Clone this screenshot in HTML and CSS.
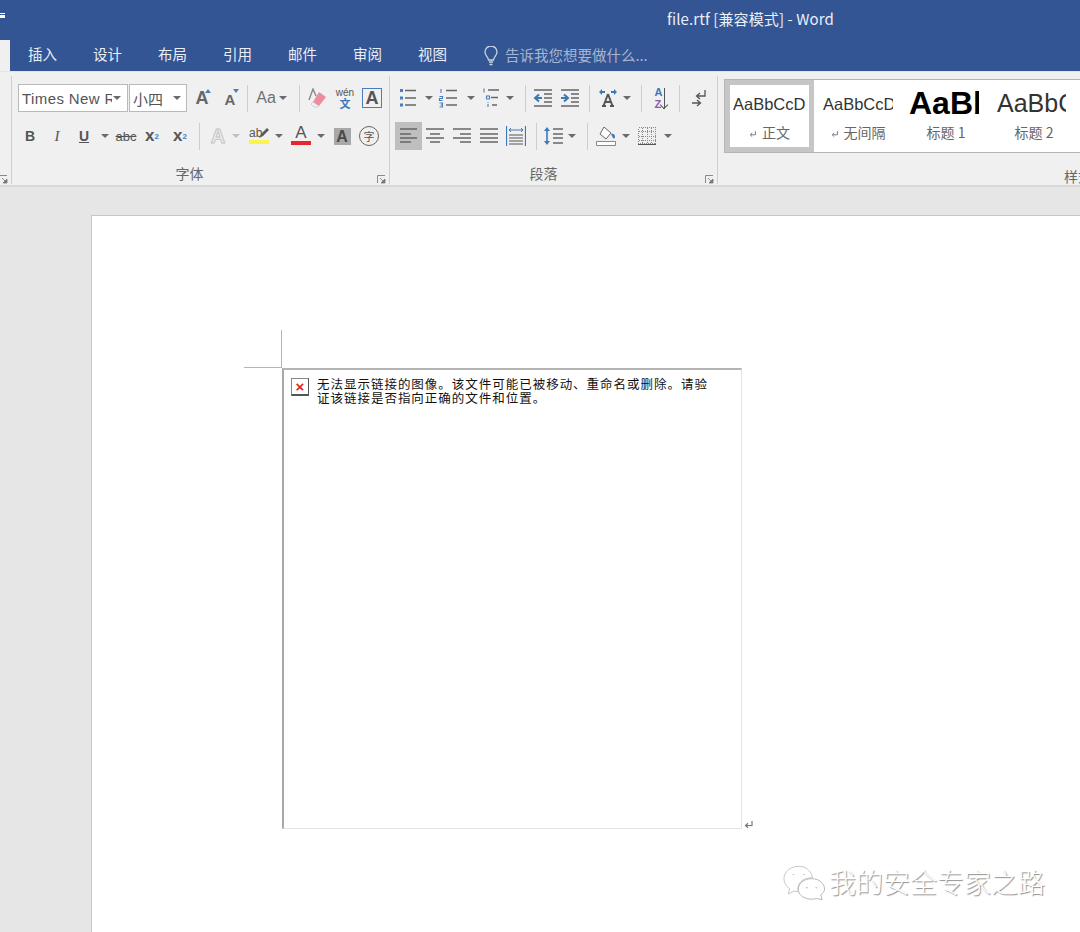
FILE: index.html
```html
<!DOCTYPE html>
<html lang="zh-CN">
<head>
  <meta charset="UTF-8">
  <meta name="viewport" content="width=device-width, initial-scale=1">
  <title>file.rtf [兼容模式] - Word</title>
  <link rel="stylesheet" href="styles.css">
</head>
<body>
  <svg class="defs" width="0" height="0">
    <symbol id="caret" viewBox="0 0 8 4"><path d="M0 0h8L4 4z" fill="#6a6a6a"/></symbol>
    <symbol id="launcher" viewBox="0 0 9 9"><path d="M.5 8V.5H8" fill="none" stroke="#8a8a8a"/><path d="M3 3l4 4M8 4v4H4z" fill="#777" stroke="#777" stroke-width=".8"/></symbol>
    <symbol id="ret" viewBox="0 0 10 9"><path d="M8 1v4.500H2M4 3.200L1.500 5.500 4 7.800" fill="none" stroke="#777" stroke-width="1.200"/></symbol>
    <symbol id="bullets" viewBox="0 0 20 20">
      <path d="M7 2.500h11M7 10h11M7 17h11" stroke="#666" stroke-width="1.400"/>
      <path d="M2 2.500h3M2 10h3M2 17h3" stroke="#4a7ebb" stroke-width="3"/>
    </symbol>
    <symbol id="numbering" viewBox="0 0 20 20">
      <path d="M8 2.500h11M8 10h11M8 17h11" stroke="#666" stroke-width="1.400"/>
      <path d="M3 1v4M1.500 8.500h3v2h-3v2h3M1.500 15h3v4h-3M2.500 17h2" fill="none" stroke="#4a7ebb" stroke-width="1.100"/>
    </symbol>
    <symbol id="multilevel" viewBox="0 0 20 20">
      <path d="M6 2h11M9 9.500h7M10 17h5" stroke="#666" stroke-width="1.300"/>
      <path d="M2 .5v4M4.500 8h3v3h-3zM6 14v.8M6 16v3" fill="none" stroke="#4a7ebb" stroke-width="1.100"/>
    </symbol>
    <symbol id="outdent" viewBox="0 0 20 20">
      <path d="M1 2h18M11 6h8M11 10h8M11 14h8M1 18h18" stroke="#666" stroke-width="1.300"/>
      <path d="M9 10H3M6 6.500L2 10l4 3.500" fill="none" stroke="#3c78b8" stroke-width="2"/>
    </symbol>
    <symbol id="indent" viewBox="0 0 20 20">
      <path d="M1 2h18M11 6h8M11 10h8M11 14h8M1 18h18" stroke="#666" stroke-width="1.300"/>
      <path d="M1 10h6M4 6.500L8 10l-4 3.500" fill="none" stroke="#3c78b8" stroke-width="2"/>
    </symbol>
    <symbol id="direction" viewBox="0 0 20 20">
      <path d="M4 18h4M12 18h4M10 6l-4.500 12M10 6l4.500 12M7 14h6" fill="none" stroke="#555" stroke-width="2"/>
      <path d="M1 4l3-3v2h3v2H4v2zM19 4l-3-3v2h-3v2h3v2z" fill="#3c78b8"/>
    </symbol>
    <symbol id="returns" viewBox="0 0 20 20">
      <path d="M16 2v6H8M11 5L7.500 8l3.500 3" fill="none" stroke="#555" stroke-width="1.300"/>
      <path d="M3 15h8M8 12l3.500 3L8 18" fill="none" stroke="#555" stroke-width="1.300"/>
    </symbol>
    <symbol id="alignleft" viewBox="0 0 20 20"><path d="M1 3h17M1 8h11M1 12h17M1 16h11" stroke="#666" stroke-width="1.300"/></symbol>
    <symbol id="aligncenter" viewBox="0 0 20 20"><path d="M1 3h18M5 8h10M1 12h18M5 16h10" stroke="#666" stroke-width="1.300"/></symbol>
    <symbol id="alignright" viewBox="0 0 20 20"><path d="M1 3h18M8 8h11M1 12h18M8 16h11" stroke="#666" stroke-width="1.300"/></symbol>
    <symbol id="justify" viewBox="0 0 20 20"><path d="M1 3h18M1 8h18M1 12h18M1 16h18" stroke="#666" stroke-width="1.300"/></symbol>
    <symbol id="distribute" viewBox="0 0 20 20">
      <path d="M.5 0v20M19.500 0v20" stroke="#3c78b8" stroke-width="1.200"/>
      <path d="M3 4h14M5 2l-2 2 2 2M15 2l2 2-2 2" fill="none" stroke="#3c78b8" stroke-width="1"/>
      <path d="M3 9h14M3 12h14M3 15h14M3 18h14" stroke="#555" stroke-width="1.200"/>
    </symbol>
    <symbol id="linespacing" viewBox="0 0 20 20">
      <path d="M3 3v14" stroke="#3c78b8" stroke-width="1.600"/>
      <path d="M0 5l3-4 3 4zM0 15l3 4 3-4z" fill="#3c78b8"/>
      <path d="M9 3h10M9 8h10M9 12h10M9 17h10" stroke="#666" stroke-width="1.400"/>
    </symbol>
    <symbol id="shading" viewBox="0 0 20 20">
      <path d="M8 1l7 6-5 6-6-5z" fill="#fff" stroke="#666"/>
      <path d="M15 8c2-1 4 0 4 3 0 1-1 2-2 1z" fill="#3c78b8"/>
      <path d="M.5 15.500h19v4H.5z" fill="#fff" stroke="#888"/>
    </symbol>
    <symbol id="borders" viewBox="0 0 18 18">
      <path d="M.5.5h17v16H.5zM4.500.5v16M9 .5v16M13.500.5v16M.5 4.500h17M.5 9h17M.5 13h17" fill="none" stroke="#8a8a8a" stroke-dasharray="1 1" shape-rendering="crispEdges"/>
      <path d="M0 17.500h18" stroke="#555" shape-rendering="crispEdges"/>
    </symbol>
    <symbol id="eraser" viewBox="0 0 20 20">
      <path d="M11 4l7 5-7 9-6-4z" fill="#eb8d9c"/>
      <path d="M5 14l6 4-2 1H6l-3-3z" fill="#f6f0f0" stroke="#bbb" stroke-width=".6"/>
      <path d="M1 12L5 1l3 7" fill="none" stroke="#888" stroke-width="1.400"/>
    </symbol>
    <symbol id="pen" viewBox="0 0 12 12">
      <path d="M1 11l2-4 6-6 2 2-6 6z" fill="#5a5a5a"/>
    </symbol>
    <symbol id="bulb" viewBox="0 0 14 20">
      <path d="M4.500 14c0-3-3.500-4-3.500-8a6 6 0 0 1 12 0c0 4-3.500 5-3.500 8z" fill="none" stroke="#c9d3e4" stroke-width="1.300"/>
      <path d="M5 16h4M5.500 18.500h3" stroke="#c9d3e4" stroke-width="1.300"/>
    </symbol>
    <symbol id="wechat" viewBox="0 0 44 36">
      <path d="M17 1C8 1 1 6.500 1 14c0 4.500 2.500 8 6 10.500L5.500 30l6-3c1.500.4 3 .6 4.500.6C14 20 20 12.500 31 13 29.500 6 24 1 17 1z" fill="#fff" stroke="#c4c4c4"/>
      <path d="M30 14c-8 0-14 5-14 11s6 10.500 14 10.500c2 0 3-.2 5-.8l6 1.300-1.500-5c2.500-2 4-3.800 4-6C43.500 19 38 14 30 14z" fill="#fff" stroke="#b5b5b5"/>
      <path d="M11 9v1M22 9v1M25 23v1M35 23v1" stroke="#b8b8b8" stroke-width="2"/>
    </symbol>
  </svg>

  <header class="titlebar">
    <div class="title-row">
      <span class="qat"></span>
      <span class="doc-title">file.rtf [兼容模式] - Word</span>
    </div>
    <nav class="tabs">
      <span class="tab-active"></span>
      <a class="tab">插入</a>
      <a class="tab">设计</a>
      <a class="tab">布局</a>
      <a class="tab">引用</a>
      <a class="tab">邮件</a>
      <a class="tab">审阅</a>
      <a class="tab">视图</a>
      <svg class="bulb"><use href="#bulb"/></svg>
      <span class="tell-me">告诉我您想要做什么...</span>
    </nav>
  </header>

  <section class="ribbon">
    <div class="group group-stub">
      <svg class="launcher"><use href="#launcher"/></svg>
    </div>

    <div class="group group-font">
      <div class="row row-1">
        <div class="combo combo-font m6"><span class="combo-text">Times New R</span><svg class="caret"><use href="#caret"/></svg></div>
        <div class="combo combo-size"><span class="combo-text">小四</span><svg class="caret"><use href="#caret"/></svg></div>
        <span class="tool m5 grow-a">A<i class="tri tri-up"></i></span>
        <span class="tool m8 shrink-a">A<i class="tri tri-down"></i></span>
        <span class="sep m7"></span>
        <span class="tool m8 case-a">Aa</span>
        <svg class="caret m3"><use href="#caret"/></svg>
        <span class="sep m12"></span>
        <span class="tool m8"><svg class="ic"><use href="#eraser"/></svg></span>
        <span class="tool m7 wen"><b>wén</b><b class="wen-zh">文</b></span>
        <span class="tool m7"><span class="boxed-a">A</span></span>
      </div>
      <div class="row row-2">
        <span class="tool m8 letter bold">B</span>
        <span class="tool m7 letter italic">I</span>
        <span class="tool m7 letter bold under">U</span>
        <svg class="caret m7"><use href="#caret"/></svg>
        <span class="tool m7 abc">abc</span>
        <span class="tool m6 letter bold big-x">x<sub class="script">2</sub></span>
        <span class="tool m8 letter bold big-x">x<sup class="script">2</sup></span>
        <span class="sep m9"></span>
        <span class="tool m8 outline-a">A</span>
        <svg class="caret caret-pale m4"><use href="#caret"/></svg>
        <span class="tool m9 marker"><span class="marker-ab">ab<svg class="pen"><use href="#pen"/></svg></span><i class="bar bar-yellow"></i></span>
        <svg class="caret m6"><use href="#caret"/></svg>
        <span class="tool m8 marker"><span class="marker-a">A</span><i class="bar bar-red"></i></span>
        <svg class="caret m6"><use href="#caret"/></svg>
        <span class="tool m7"><span class="shade-a">A</span></span>
        <span class="tool m7"><span class="circle-zi">字</span></span>
      </div>
      <div class="group-label">字体</div>
      <svg class="launcher"><use href="#launcher"/></svg>
    </div>

    <div class="group group-para">
      <div class="row row-1">
        <span class="tool m8"><svg class="ic"><use href="#bullets"/></svg></span>
        <svg class="caret m7"><use href="#caret"/></svg>
        <span class="tool m5"><svg class="ic"><use href="#numbering"/></svg></span>
        <svg class="caret m9"><use href="#caret"/></svg>
        <span class="tool m7"><svg class="ic"><use href="#multilevel"/></svg></span>
        <svg class="caret m4"><use href="#caret"/></svg>
        <span class="sep m11"></span>
        <span class="tool m7"><svg class="ic"><use href="#outdent"/></svg></span>
        <span class="tool m7"><svg class="ic"><use href="#indent"/></svg></span>
        <span class="sep m9"></span>
        <span class="tool m8"><svg class="ic"><use href="#direction"/></svg></span>
        <svg class="caret m5"><use href="#caret"/></svg>
        <span class="sep m10"></span>
        <span class="tool m8 sort"><span class="sort-letters"><b class="sort-a">A</b><b class="sort-z">Z</b></span><span class="sort-arrow"></span></span>
        <span class="sep m9"></span>
        <span class="tool m9"><svg class="ic"><use href="#returns"/></svg></span>
      </div>
      <div class="row row-2">
        <span class="tool tool-selected m5"><svg class="ic"><use href="#alignleft"/></svg></span>
        <span class="tool m3"><svg class="ic"><use href="#aligncenter"/></svg></span>
        <span class="tool m7"><svg class="ic"><use href="#alignright"/></svg></span>
        <span class="tool m7"><svg class="ic"><use href="#justify"/></svg></span>
        <span class="tool m7"><svg class="ic"><use href="#distribute"/></svg></span>
        <span class="sep m10"></span>
        <span class="tool m7"><svg class="ic"><use href="#linespacing"/></svg></span>
        <svg class="caret m4"><use href="#caret"/></svg>
        <span class="sep m11"></span>
        <span class="tool m8"><svg class="ic"><use href="#shading"/></svg></span>
        <svg class="caret m6"><use href="#caret"/></svg>
        <span class="tool m7"><svg class="ic ic-small"><use href="#borders"/></svg></span>
        <svg class="caret m7"><use href="#caret"/></svg>
      </div>
      <div class="group-label">段落</div>
      <svg class="launcher"><use href="#launcher"/></svg>
    </div>

    <div class="group group-styles">
      <div class="gallery">
        <div class="style-item style-selected">
          <div class="sample sample-body">AaBbCcDd</div>
          <div class="style-name"><svg class="ret"><use href="#ret"/></svg>正文</div>
        </div>
        <div class="style-item">
          <div class="sample sample-body">AaBbCcDd</div>
          <div class="style-name"><svg class="ret"><use href="#ret"/></svg>无间隔</div>
        </div>
        <div class="style-item">
          <div class="sample sample-h1">AaBb</div>
          <div class="style-name">标题 1</div>
        </div>
        <div class="style-item">
          <div class="sample sample-h2">AaBbC</div>
          <div class="style-name">标题 2</div>
        </div>
      </div>
      <div class="group-label label-styles">样式</div>
    </div>
  </section>

  <main class="workspace">
    <div class="page">
      <div class="picture-wrap">
        <span class="crop crop-v"></span>
        <span class="crop crop-h"></span>
        <div class="picture">
          <span class="broken"><i class="broken-x">×</i></span>
          <p class="broken-text">无法显示链接的图像。该文件可能已被移动、重命名或删除。请验证该链接是否指向正确的文件和位置。</p>
        </div>
        <svg class="para-mark"><use href="#ret"/></svg>
      </div>
    </div>
    <div class="watermark">
      <svg class="wechat"><use href="#wechat"/></svg>
      <span class="wm-text">我的安全专家之路</span>
    </div>
  </main>
</body>
</html>
```

FILE: styles.css
```css
* { box-sizing: border-box; }
html, body { margin: 0; height: 100%; }
body { width: 1080px; height: 932px; overflow: hidden; background: #e6e6e6; font-family: "Noto Sans CJK SC", "Liberation Sans", sans-serif; color: #555; }
.defs { display: block; height: 0; }

/* title bar and tabs */
.titlebar { height: 72px; background: #335593; border-bottom: 1px solid #dfe6f2; color: #e9eef7; }
.title-row { height: 40px; display: flex; align-items: center; }
.qat { width: 5px; height: 5px; margin-top: -9px; border-top: 1px solid #fff; border-bottom: 3px solid #fff; flex: none; }
.doc-title { margin-left: 662px; margin-top: -4px; font-size: 15px; letter-spacing: .1px; white-space: nowrap; }
.tabs { height: 31px; display: flex; align-items: center; }
.tab-active { width: 10px; height: 31px; background: #f0f0f0; flex: none; }
.tab { width: 65px; text-align: center; font-size: 14.5px; padding-bottom: 5px; color: #e9eef7; }
.bulb { width: 14px; height: 20px; margin-left: 19px; flex: none; }
.tell-me { margin-left: 7px; font-size: 14.5px; color: #a6b6d2; padding-bottom: 3px; white-space: nowrap; }

/* ribbon */
.ribbon { height: 115px; background: #f0f0f0; border-bottom: 2px solid #d8d8d8; display: flex; }
.group { position: relative; height: 108px; margin-top: 4px; border-right: 1px solid #cfcfcf; flex: none; }
.group-stub { width: 12px; }
.group-font { width: 378px; }
.group-para { width: 328px; }
.group-styles { width: 362px; border-right: 0; overflow: hidden; }
.launcher { position: absolute; right: 3px; bottom: 0; width: 9px; height: 9px; }
.row { display: flex; align-items: center; height: 28px; }
.row-1 { margin-top: 8px; }
.row-2 { margin-top: 10px; }
.group-label { margin-top: 13px; text-align: center; font-size: 14px; line-height: 20px; color: #666; }
.group-font .group-label { padding-right: 22px; }
.group-para .group-label { padding-right: 20px; }
.label-styles { margin-top: 13px; margin-right: -12px; text-align: right; }

.tool { position: relative; width: 20px; height: 28px; flex: none; display: flex; align-items: center; justify-content: center; font-family: "Liberation Sans", sans-serif; color: #555; }
.tool-selected { width: 27px; background: #bfbfbf; }
.ic { width: 20px; height: 20px; flex: none; }
.ic-small { width: 18px; height: 18px; }
.caret { width: 8px; height: 4px; flex: none; }
.caret-pale { opacity: .35; }
.sep { width: 1px; height: 27px; background: #cdcdcd; flex: none; }
.m3 { margin-left: 3px; } .m4 { margin-left: 4px; } .m5 { margin-left: 5px; } .m6 { margin-left: 6px; }
.m7 { margin-left: 7px; } .m8 { margin-left: 8px; } .m9 { margin-left: 9px; } .m10 { margin-left: 10px; }
.m11 { margin-left: 11px; } .m12 { margin-left: 12px; }

.combo { height: 28px; background: #fff; border: 1px solid #b9b9b9; display: flex; align-items: center; justify-content: space-between; padding: 0 6px 0 3px; flex: none; font-size: 15px; color: #555; }
.combo-font { width: 110px; font-family: "Liberation Sans", sans-serif; letter-spacing: .4px; }
.combo-size { width: 58px; margin-left: 1px; padding-right: 5px; }
.combo-text { overflow: hidden; white-space: nowrap; }
.combo-font .combo-text { width: 90px; }

.grow-a { font-size: 18px; font-weight: 700; color: #666; }
.shrink-a { font-size: 15px; font-weight: 700; padding-top: 2px; color: #666; }
.tri { position: absolute; right: 1px; top: 5px; width: 0; height: 0; border-left: 3px solid transparent; border-right: 3px solid transparent; }
.tri-up { border-bottom: 4px solid #4a7ebb; }
.tri-down { border-top: 4px solid #4a7ebb; }
.case-a { font-size: 16px; color: #707070; }
.wen { flex-direction: column; line-height: 10px; font-size: 10px; color: #555; }
.wen b { font-weight: 400; }
.wen .wen-zh { color: #3c78b8; font-size: 11px; font-weight: 700; font-family: "Noto Sans CJK SC", sans-serif; }
.boxed-a { width: 20px; height: 20px; border: 1px solid #4a7ebb; text-align: center; font-size: 18px; font-weight: 700; line-height: 18px; color: #555; }
.letter { font-size: 14px; color: #555; }
.big-x { font-size: 17px; }
.bold { font-weight: 700; }
.italic { font-style: italic; font-family: "Liberation Serif", serif; font-size: 15px; }
.under { text-decoration: underline; }
.script { font-size: 8px; color: #4a7ebb; }
.abc { font-size: 13px; text-decoration: line-through; }
.outline-a { font-size: 20px; font-weight: 700; color: #f0f0f0; -webkit-text-stroke: 1px #c4c4c4; }
.marker { flex-direction: column; }
.marker-ab { position: relative; width: 20px; font-size: 12px; line-height: 14px; margin-top: -2px; }
.pen { position: absolute; right: -1px; top: 1px; width: 12px; height: 12px; }
.marker-a { font-size: 17px; line-height: 16px; margin-top: -3px; }
.bar { display: block; width: 20px; height: 4px; }
.bar-yellow { background: #fdf34e; }
.bar-red { background: #e8262c; }
.shade-a { width: 17px; height: 17px; background: #a8a8a8; text-align: center; font-size: 16px; font-weight: 700; line-height: 17px; color: #4a4a4a; }
.circle-zi { width: 20px; height: 20px; border: 1px solid #666; border-radius: 50%; text-align: center; font-size: 11px; line-height: 18px; font-family: "Noto Sans CJK SC", sans-serif; }
.sort { gap: 2px; }
.sort-letters { display: flex; flex-direction: column; line-height: 12px; font-size: 11px; }
.sort-a { color: #3c78b8; }
.sort-z { color: #8e5aa8; }
.sort-arrow { position: relative; width: 1px; height: 20px; background: #555; }
.sort-arrow::after { content: ""; position: absolute; left: -3px; bottom: 0; width: 5px; height: 5px; border-right: 1px solid #555; border-bottom: 1px solid #555; transform: rotate(45deg); }

/* style gallery */
.gallery { display: flex; width: 362px; height: 74px; margin: 3px 0 0 6px; background: #fff; border-top: 1px solid #b5b5b5; border-left: 1px solid #b5b5b5; border-bottom: 1px solid #b5b5b5; }
.style-item { width: 88px; flex: none; padding: 0 9px; overflow: hidden; }
.style-selected { width: 89px; padding: 4px 3px 0; border: 5px solid #c6c6c6; height: 72px; }
.sample { height: 41px; line-height: 48px; font-family: "Liberation Sans", sans-serif; color: #333; overflow: hidden; white-space: nowrap; font-size: 16.500px; }
.style-selected .sample { height: 32px; line-height: 30px; }
.sample-h1 { font-size: 32px; font-weight: 700; line-height: 46px; color: #000; margin-left: -2px; margin-right: 2px; }
.sample-h2 { font-size: 25px; line-height: 46px; margin-left: -2px; margin-right: 3px; }
.style-name { display: flex; justify-content: center; align-items: center; height: 20px; font-size: 14px; line-height: 20px; color: #666; margin-top: 1px; }
.ret { width: 8px; height: 8px; margin-right: 5px; margin-top: 3px; flex: none; }

/* document area */
.workspace { position: relative; height: 745px; padding: 28px 0 0 91px; }
.page { height: 740px; background: #fff; border: 1px solid #c6c6c6; border-right: 0; padding: 114px 0 0 152px; }
.picture-wrap { position: relative; width: 460px; padding-top: 38px; }
.crop { position: absolute; background: #b5b5b5; }
.crop-v { left: 37px; top: 0; width: 1px; height: 38px; }
.crop-h { left: 0; top: 37px; width: 38px; height: 1px; }
.picture { display: flex; align-items: flex-start; width: 460px; height: 461px; margin-left: 38px; padding: 8px 20px 0 7px; background: #fff; border: 1px solid #e4e4e4; border-left: 2px solid #a8a8a8; border-top: 2px solid #b4b4b4; }
.broken { width: 18px; height: 18px; flex: none; border: 1px solid #888; border-right-color: #555; border-bottom: 2px solid #555; display: flex; align-items: center; justify-content: center; }
.broken-x { font-style: normal; font-weight: 700; font-size: 15px; line-height: 15px; color: #e81c1c; font-family: "Liberation Sans", sans-serif; }
.broken-text { width: 394px; margin: -1px 0 0 8px; font-size: 12.500px; line-height: 14px; letter-spacing: .98px; color: #111; }
.para-mark { position: absolute; left: 500px; bottom: 0; width: 10px; height: 9px; }

.watermark { position: absolute; left: 783px; top: 677px; display: flex; align-items: center; }
.wechat { width: 42px; height: 35px; flex: none; }
.wm-text { margin-left: 4px; font-size: 27px; line-height: 36px; white-space: nowrap; font-weight: 300; color: #fff; text-shadow: 1px 1px 1px #8d8d8d; }
```
